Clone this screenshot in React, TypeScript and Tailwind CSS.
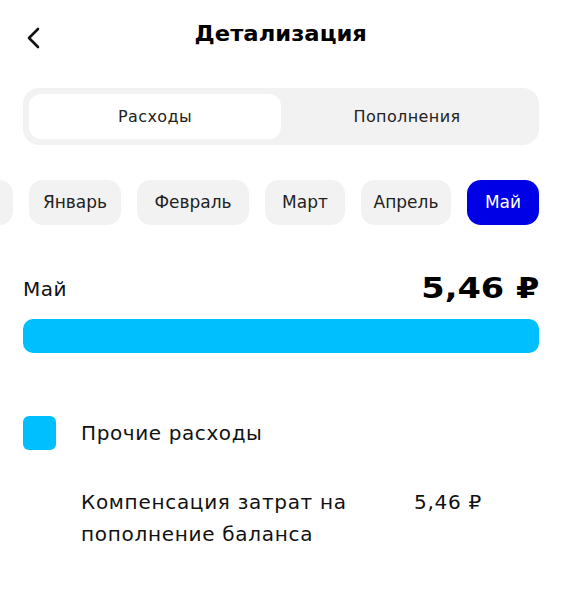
import React from "react";

const months = [
  { name: "Декабрь", w: "w-[104px]" },
  { name: "Январь", w: "w-[92px]" },
  { name: "Февраль", w: "w-[112px]" },
  { name: "Март", w: "w-[80px]" },
  { name: "Апрель", w: "w-[90px]" },
  { name: "Май", w: "w-[72px]" },
];

export default function App() {
  const active = "Май";
  return (
    <div className="w-[562px] h-[590px] bg-white text-black overflow-hidden" style={{ fontFamily: "'DejaVu Sans', 'Noto Sans', sans-serif" }}>
      {/* header */}
      <div className="relative flex items-center justify-center h-[70px]">
        <button className="absolute left-[22px] top-[22px] p-1" aria-label="Назад">
          <svg width="16" height="24" viewBox="0 0 16 24" fill="none">
            <path d="M12 3 L3 12 L12 21" stroke="#111" strokeWidth="2.6" strokeLinecap="round" strokeLinejoin="round" />
          </svg>
        </button>
        <h1 className="text-[21px] font-black scale-x-[1.08]">Детализация</h1>
      </div>

      {/* tabs */}
      <div className="mx-[23px] mt-[18px] h-[57px] rounded-[16px] bg-[#f2f2f2] p-[6px] flex">
        <div className="flex-1 rounded-[12px] bg-white flex items-center justify-center text-[16px] tracking-[0.4px] text-[#222]">Расходы</div>
        <div className="flex-1 flex items-center justify-center text-[16px] tracking-[0.4px] text-[#222]">Пополнения</div>
      </div>

      {/* months */}
      <div className="mt-[35px] flex justify-end gap-4 overflow-hidden pr-[23px]">
        {months.map((m) => (
          <div
            key={m.name}
            className={
              m.name === active
                ? `${m.w} shrink-0 h-[45px] rounded-[14px] bg-[#0000e6] text-white flex items-center justify-center text-[17px]`
                : `${m.w} shrink-0 h-[45px] rounded-[14px] bg-[#f2f2f2] text-[#222] flex items-center justify-center text-[17px]`
            }
          >
            {m.name}
          </div>
        ))}
      </div>

      {/* total */}
      <div className="mx-[23px] mt-[48px] h-[32px] flex items-center justify-between">
        <span className="text-[20px] tracking-[0.5px] text-[#111]">Май</span>
        <span className="text-[28px] font-black scale-x-[1.2] origin-right">5,46 ₽</span>
      </div>
      <div className="mx-[23px] mt-[14px] h-[34px] rounded-[10px] bg-[#00bfff]" />

      {/* legend */}
      <div className="mx-[23px] mt-[63px] flex items-center gap-[25px]">
        <div className="w-[33px] h-[34px] rounded-[6px] bg-[#00bfff]" />
        <span className="text-[20px] tracking-[0.6px] text-[#111]">Прочие расходы</span>
      </div>
      <div className="ml-[81px] mr-[23px] mt-[36px] flex items-start">
        <p className="w-[300px] text-[20px] tracking-[0.7px] leading-[32px] text-[#111]">Компенсация затрат на пополнение баланса</p>
        <span className="ml-[33px] text-[20px] tracking-[0.7px] leading-[32px] text-[#111]">5,46 ₽</span>
      </div>
    </div>
  );
}
